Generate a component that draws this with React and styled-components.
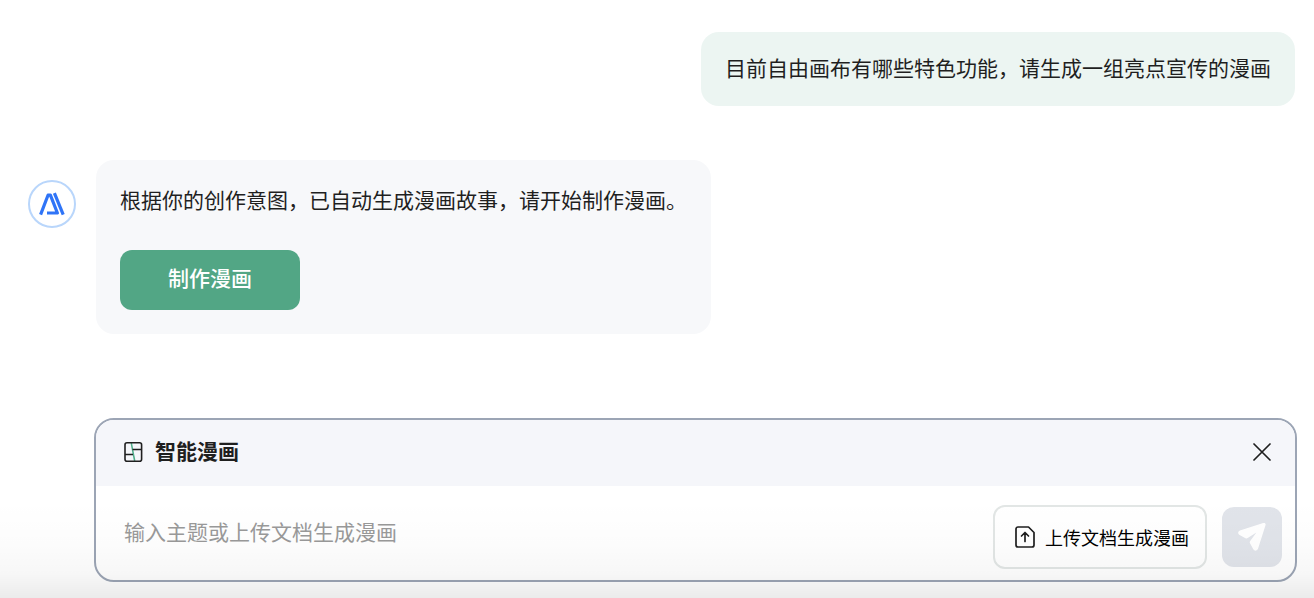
import React, { useState } from 'react';
import styled, { createGlobalStyle } from 'styled-components';

const GlobalStyle = createGlobalStyle`
  * {
    box-sizing: border-box;
  }

  body {
    margin: 0;
    background-color: #ffffff;
    color: #1f1f1f;
    font-family: 'Liberation Sans', 'Noto Sans CJK SC', sans-serif;
  }

  button,
  input {
    font-family: inherit;
  }
`;

const Page = styled.main`
  position: relative;
  display: flex;
  flex-direction: column;
  min-height: 100vh;
  padding: 32px 17px 16px 28px;
`;

const MessageRow = styled.div`
  display: flex;
  align-items: flex-start;
  justify-content: ${(props) => (props.$own ? 'flex-end' : 'flex-start')};
  gap: 20px;
  margin-bottom: 54px;
  padding-right: 2px;
`;

const Avatar = styled.div`
  flex: none;
  display: flex;
  width: 48px;
  height: 48px;
  margin-top: 20px;
`;

const Bubble = styled.div`
  padding: ${(props) => (props.$own ? '20px' : '24px')} 24px;
  border-radius: 18px;
  background-color: ${(props) => (props.$own ? '#ecf5f2' : '#f7f8fa')};
`;

const MessageText = styled.p`
  margin: 0;
  font-size: 21px;
  line-height: 34px;
`;

const MakeButton = styled.button`
  display: block;
  width: 180px;
  height: 60px;
  margin-top: 32px;
  padding: 0 0 6px;
  border: none;
  border-radius: 12px;
  background-color: #52a685;
  color: #ffffff;
  font-size: 21px;
  font-weight: 500;
  cursor: pointer;
`;

const Composer = styled.form`
  margin-top: auto;
  margin-left: 66px;
  border: 2px solid #9ca5b5;
  border-radius: 20px;
  background-color: #ffffff;
  overflow: hidden;
`;

const ComposerHeader = styled.div`
  display: flex;
  align-items: center;
  height: 66px;
  padding: 0 24px 2px 28px;
  background-color: #f5f6fa;
`;

const ComposerTitle = styled.h2`
  flex: 1;
  margin: 0 0 0 12px;
  font-size: 21px;
  font-weight: 700;
  line-height: 34px;
`;

const CloseButton = styled.button`
  display: flex;
  padding: 0;
  border: none;
  background: none;
  color: #1f1f1f;
  cursor: pointer;
`;

const ComposerBody = styled.div`
  display: flex;
  align-items: center;
  padding: 19px 13px 11px 28px;
`;

const PromptInput = styled.input`
  flex: 1;
  min-width: 0;
  height: 34px;
  margin-bottom: 8px;
  padding: 0;
  border: none;
  outline: none;
  background: none;
  color: #1f1f1f;
  font-size: 21px;

  &::placeholder {
    color: #999999;
    opacity: 1;
  }
`;

const UploadButton = styled.button`
  display: flex;
  align-items: center;
  gap: 10px;
  height: 64px;
  margin-right: 15px;
  padding: 0 16px 0 20px;
  border: 2px solid #e2e6e5;
  border-radius: 12px;
  background-color: #ffffff;
  color: #000000;
  font-size: 18px;
  cursor: pointer;
`;

const SendButton = styled.button`
  display: flex;
  align-items: center;
  justify-content: center;
  width: 60px;
  height: 60px;
  padding: 0;
  border: none;
  border-radius: 12px;
  background-color: #e1e4ea;
  color: #ffffff;
  cursor: pointer;
`;

const BottomShade = styled.div`
  position: absolute;
  right: 0;
  bottom: 0;
  left: 0;
  height: 98px;
  background: linear-gradient(
    to bottom,
    rgba(0, 0, 0, 0) 0%,
    rgba(0, 0, 0, 0.01) 45%,
    rgba(0, 0, 0, 0.03) 75%,
    rgba(0, 0, 0, 0.08) 100%
  );
  pointer-events: none;
`;

const LogoIcon = () => (
  <svg width="48" height="48" viewBox="0 0 48 48" fill="none" aria-hidden="true">
    <circle cx="24" cy="24" r="23" fill="#fff" stroke="#b9d6fb" strokeWidth="2" />
    <g stroke="#2f74f7" strokeWidth="3.2" strokeLinejoin="round">
      <path d="M12.6 34.6 20 15.2h2.4l7 17.8H19" />
      <path d="M26.4 13.2 35.2 34.6" />
    </g>
  </svg>
);

const ComicIcon = () => (
  <svg width="19" height="22" viewBox="0 0 19 22" fill="none" aria-hidden="true">
    <path d="M7.3 2l3.4 18" stroke="#4fae8b" strokeWidth="1.5" />
    <path d="M1 13.5h8M8.5 8.5H18" stroke="#1f1f1f" strokeWidth="1.5" />
    <rect x="1" y="1.8" width="16.6" height="18.4" rx="2" stroke="#1f1f1f" strokeWidth="1.6" />
  </svg>
);

const CloseIcon = () => (
  <svg width="18" height="18" viewBox="0 0 18 18" fill="none" aria-hidden="true">
    <path d="M1 1l16 16M17 1L1 17" stroke="currentColor" strokeWidth="1.7" strokeLinecap="round" />
  </svg>
);

const UploadIcon = () => (
  <svg width="20" height="22" viewBox="0 0 20 22" fill="none" aria-hidden="true">
    <g stroke="#1f1f1f" strokeWidth="1.7" strokeLinejoin="round" strokeLinecap="round">
      <path d="M3 1h10.5L19 6.5V19a2 2 0 0 1-2 2H3a2 2 0 0 1-2-2V3a2 2 0 0 1 2-2z" />
      <path d="M10 15.500V7M6.500 10 10 6.500 13.500 10" />
    </g>
  </svg>
);

const SendIcon = () => (
  <svg width="28" height="30" viewBox="0 0 28 30" fill="currentColor" aria-hidden="true">
    <path d="M25.2 1C27 .5 28 1.600 27.500 3.300L20 26.800c-.8 2.200-3.600 2.500-4.700.5L12 21.300c-.4-.8-.3-1.500.2-2.200l6.200-8.700-8.700 5.700c-.7.5-1.500.5-2.200.1L1.600 13C-.4 11.900-.2 9.200 1.900 8.500z" />
  </svg>
);

const App = () => {
  const [prompt, setPrompt] = useState('');

  const handleSubmit = (e) => {
    e.preventDefault();
    setPrompt('');
  };

  return (
    <>
      <GlobalStyle />
      <Page>
        <MessageRow $own>
          <Bubble $own>
            <MessageText>目前自由画布有哪些特色功能，请生成一组亮点宣传的漫画</MessageText>
          </Bubble>
        </MessageRow>
        <MessageRow>
          <Avatar>
            <LogoIcon />
          </Avatar>
          <Bubble>
            <MessageText>根据你的创作意图，已自动生成漫画故事，请开始制作漫画。</MessageText>
            <MakeButton type="button">制作漫画</MakeButton>
          </Bubble>
        </MessageRow>
        <Composer onSubmit={handleSubmit}>
          <ComposerHeader>
            <ComicIcon />
            <ComposerTitle>智能漫画</ComposerTitle>
            <CloseButton type="button" aria-label="关闭">
              <CloseIcon />
            </CloseButton>
          </ComposerHeader>
          <ComposerBody>
            <PromptInput
              type="text"
              aria-label="漫画主题"
              placeholder="输入主题或上传文档生成漫画"
              value={prompt}
              onChange={(e) => setPrompt(e.target.value)} />
            <UploadButton type="button">
              <UploadIcon />
              上传文档生成漫画
            </UploadButton>
            <SendButton type="submit" aria-label="发送">
              <SendIcon />
            </SendButton>
          </ComposerBody>
        </Composer>
        <BottomShade />
      </Page>
    </>
  );
};

export default App;
